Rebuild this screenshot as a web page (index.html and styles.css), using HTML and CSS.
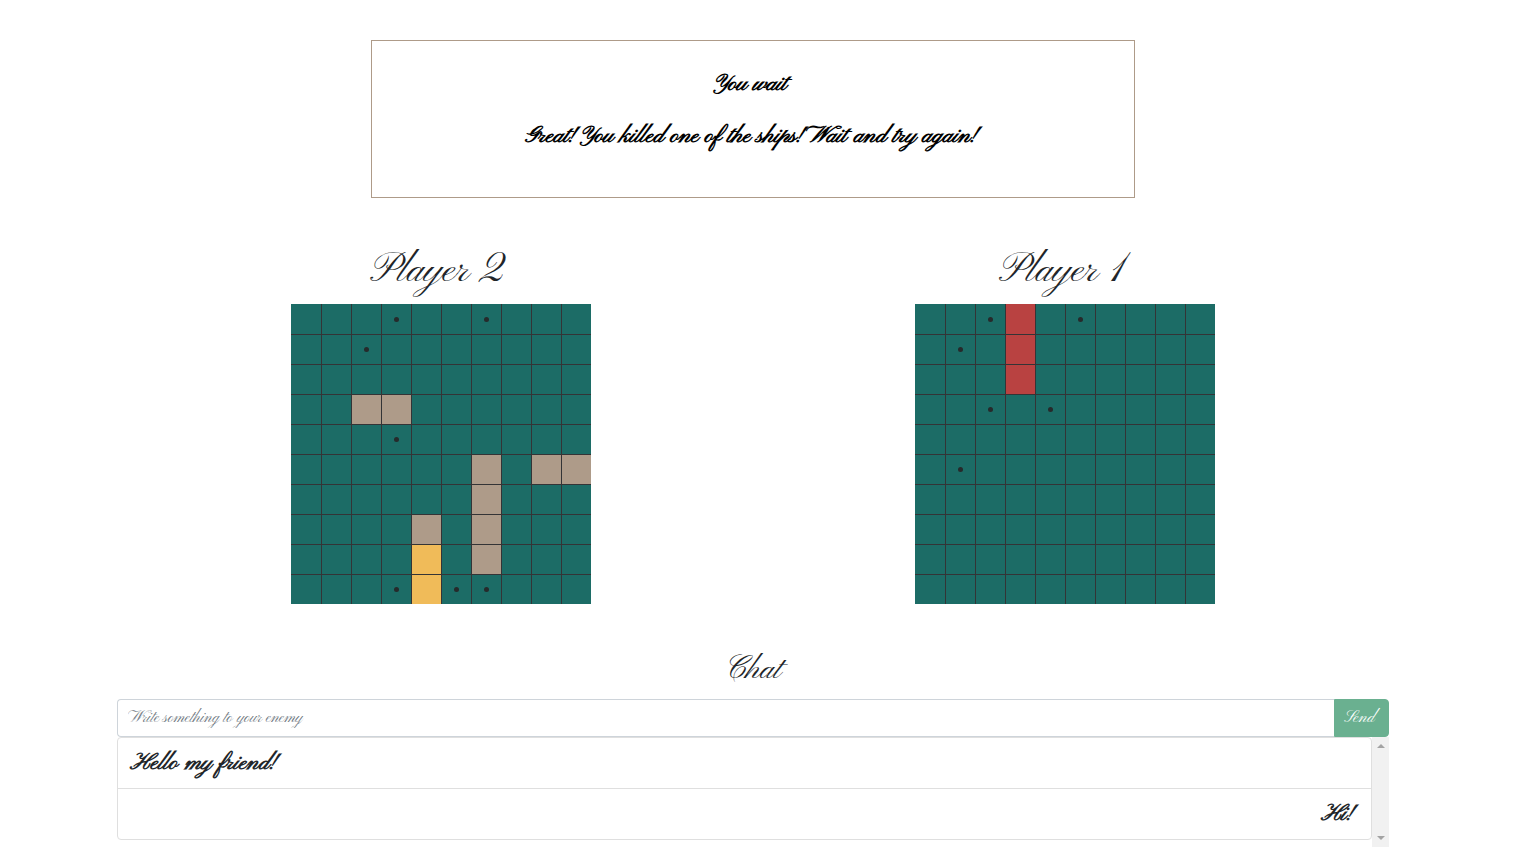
FILE: index.html
```html
<!DOCTYPE html>
<html lang="en">
<head>
<meta charset="utf-8">
<meta name="viewport" content="width=device-width, initial-scale=1">
<title>Battleship</title>
<link rel="stylesheet" href="styles.css">
</head>
<body>
<main class="page">
  <section class="status" aria-live="polite">
    <p class="status-line">You wait</p>
    <p class="status-line">Great! You killed one of the ships! Wait and try again!</p>
  </section>

  <div class="boards">
    <section class="player">
      <h2 class="player-name" id="own-name">Player 2</h2>
      <table class="board" aria-labelledby="own-name">
        <tr><td></td><td></td><td></td><td class="miss"></td><td></td><td></td><td class="miss"></td><td></td><td></td><td></td></tr>
        <tr><td></td><td></td><td class="miss"></td><td></td><td></td><td></td><td></td><td></td><td></td><td></td></tr>
        <tr><td></td><td></td><td></td><td></td><td></td><td></td><td></td><td></td><td></td><td></td></tr>
        <tr><td></td><td></td><td class="ship"></td><td class="ship"></td><td></td><td></td><td></td><td></td><td></td><td></td></tr>
        <tr><td></td><td></td><td></td><td class="miss"></td><td></td><td></td><td></td><td></td><td></td><td></td></tr>
        <tr><td></td><td></td><td></td><td></td><td></td><td></td><td class="ship"></td><td></td><td class="ship"></td><td class="ship"></td></tr>
        <tr><td></td><td></td><td></td><td></td><td></td><td></td><td class="ship"></td><td></td><td></td><td></td></tr>
        <tr><td></td><td></td><td></td><td></td><td class="ship"></td><td></td><td class="ship"></td><td></td><td></td><td></td></tr>
        <tr><td></td><td></td><td></td><td></td><td class="hit"></td><td></td><td class="ship"></td><td></td><td></td><td></td></tr>
        <tr><td></td><td></td><td></td><td class="miss"></td><td class="hit"></td><td class="miss"></td><td class="miss"></td><td></td><td></td><td></td></tr>
      </table>
    </section>

    <section class="player">
      <h2 class="player-name" id="enemy-name">Player 1</h2>
      <table class="board" aria-labelledby="enemy-name">
        <tr><td></td><td></td><td class="miss"></td><td class="killed"></td><td></td><td class="miss"></td><td></td><td></td><td></td><td></td></tr>
        <tr><td></td><td class="miss"></td><td></td><td class="killed"></td><td></td><td></td><td></td><td></td><td></td><td></td></tr>
        <tr><td></td><td></td><td></td><td class="killed"></td><td></td><td></td><td></td><td></td><td></td><td></td></tr>
        <tr><td></td><td></td><td class="miss"></td><td></td><td class="miss"></td><td></td><td></td><td></td><td></td><td></td></tr>
        <tr><td></td><td></td><td></td><td></td><td></td><td></td><td></td><td></td><td></td><td></td></tr>
        <tr><td></td><td class="miss"></td><td></td><td></td><td></td><td></td><td></td><td></td><td></td><td></td></tr>
        <tr><td></td><td></td><td></td><td></td><td></td><td></td><td></td><td></td><td></td><td></td></tr>
        <tr><td></td><td></td><td></td><td></td><td></td><td></td><td></td><td></td><td></td><td></td></tr>
        <tr><td></td><td></td><td></td><td></td><td></td><td></td><td></td><td></td><td></td><td></td></tr>
        <tr><td></td><td></td><td></td><td></td><td></td><td></td><td></td><td></td><td></td><td></td></tr>
      </table>
    </section>
  </div>

  <section class="chat">
    <h3 class="chat-title">Chat</h3>
    <form class="chat-form">
      <input class="chat-input" type="text" aria-label="Message" placeholder="Write something to your enemy">
      <button class="chat-send" type="button">Send</button>
    </form>
    <div class="chat-log">
      <ul class="messages">
        <li class="message">Hello my friend!</li>
        <li class="message message-own">Hi!</li>
      </ul>
      <div class="scroll-track" aria-hidden="true">
        <span class="arrow-up"></span>
        <span class="arrow-down"></span>
      </div>
    </div>
  </section>
</main>
</body>
</html>
```

FILE: styles.css
```css
*, *::before, *::after { box-sizing: border-box; }

body {
  margin: 0;
  padding: 40px 150px 16px 117px;
  background: #fff;
  color: #212529;
  font-family: "Pinyon Script", "Liberation Serif", serif;
}

h2, h3, p, ul { margin: 0; padding: 0; font-weight: 400; }

.status {
  width: 60%;
  margin: 0 auto;
  padding: 25px 30px 43px 24px;
  border: 1px solid #ae9b89;
  color: #000;
  text-align: center;
}

.status-line {
  font-size: 24px;
  font-weight: 700;
  line-height: 36px;
}

.status-line + .status-line { margin-top: 16px; }

.boards {
  display: flex;
  padding: 0 12px;
  margin-top: 50px;
}

.player {
  flex: 1;
  display: flex;
  flex-direction: column;
  align-items: center;
}

.player-name {
  padding-right: 8px;
  font-size: 41px;
  line-height: 48px;
  margin-bottom: 8px;
}

.board {
  width: 300px;
  table-layout: fixed;
  border-spacing: 0;
  background: #1c6c66;
}

.board td {
  height: 30px;
  padding: 0;
  border: 0 solid #343436;
  border-width: 1px 0 0 1px;
}

.board tr:first-child td { border-top-width: 0; }
.board td:first-child { border-left-width: 0; }

.ship { background: #ae9b89; }
.hit { background: #f0bb59; }
.killed { background: #b94241; }

.miss::before {
  content: "";
  display: block;
  width: 5px;
  height: 5px;
  margin: 0 auto;
  border-radius: 50%;
  background: #262a2b;
}

.chat { margin-top: 47px; }

.chat-title {
  font-size: 33px;
  line-height: 40px;
  margin-bottom: 8px;
  text-align: center;
}

.chat-form { display: flex; }

.chat-input {
  flex: 1;
  min-width: 0;
  height: 38px;
  padding: 0 10px;
  border: 1px solid #ced4da;
  border-right: 0;
  border-radius: 4px 0 0 4px;
  background: #fff;
  color: #495057;
  font: inherit;
  font-size: 16px;
}

.chat-input::placeholder { color: #6c757d; opacity: 1; }

.chat-send {
  width: 55px;
  height: 38px;
  padding: 0 4px 0 0;
  border: 1px solid #6ab090;
  border-radius: 0 4px 4px 0;
  background: #6ab090;
  color: #fff;
  font: inherit;
  font-size: 17px;
}

.chat-log { display: flex; height: 110px; }

.messages {
  flex: 1;
  align-self: flex-start;
  list-style: none;
  border: 1px solid #dfdfdf;
  border-radius: 4px;
}

.message {
  padding: 8px 12px;
  font-size: 24px;
  font-weight: 700;
  line-height: 34px;
}

.message + .message { border-top: 1px solid #dfdfdf; }

.message-own {
  padding-right: 20px;
  text-align: right;
}

.scroll-track {
  width: 17px;
  padding: 7px 0;
  display: flex;
  flex-direction: column;
  align-items: center;
  justify-content: space-between;
  background: #f1f1f1;
}

.arrow-up, .arrow-down {
  border: 4px solid transparent;
  border-width: 0 4px;
}

.arrow-up { border-bottom: 4px solid #a3a3a3; }
.arrow-down { border-top: 4px solid #a3a3a3; }
```
